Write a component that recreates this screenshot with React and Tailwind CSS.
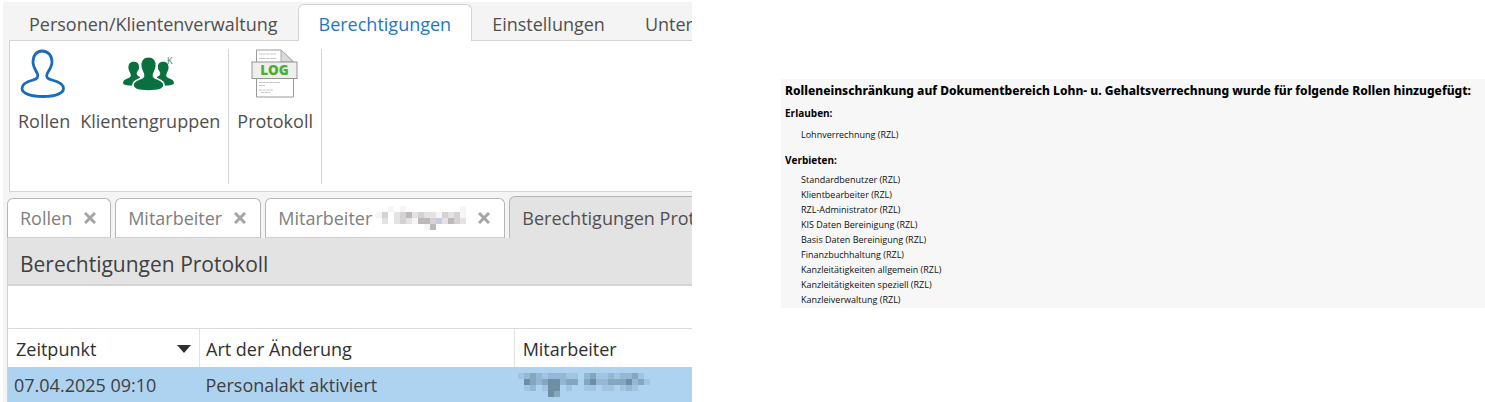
const ribbonTabs = ["Personen/Klientenverwaltung", "Berechtigungen", "Einstellungen", "Unter"];

const deniedRoles = [
  "Standardbenutzer (RZL)",
  "Klientbearbeiter (RZL)",
  "RZL-Administrator (RZL)",
  "KIS Daten Bereinigung (RZL)",
  "Basis Daten Bereinigung (RZL)",
  "Finanzbuchhaltung (RZL)",
  "Kanzleitätigkeiten allgemein (RZL)",
  "Kanzleitätigkeiten speziell (RZL)",
  "Kanzleiverwaltung (RZL)",
];

function RoleIcon() {
  return (
    <svg viewBox="0 0 48 50" className="h-[50px] w-12" fill="none" stroke="#1a6bba" strokeWidth="2.8" aria-hidden="true">
      <path d="M22 2C16.500 2 13 6.500 13 13C13 18 16 21.500 17.500 25C18.500 28 17.500 29.800 13 31C6 32.800 2 35.500 2 39.500C2 44.500 11 47.500 23 47.500C35 47.500 43.500 44.500 43.500 39.500C43.500 35.500 39 32.800 32 31C27 29.800 26 28 27 25C28.500 21.500 32 18 32 13C32 6.500 28 2 22 2Z" />
    </svg>
  );
}

function GroupIcon() {
  return (
    <svg viewBox="0 0 60 50" className="h-[50px] w-[60px]" fill="#0b7040" aria-hidden="true">
      <path d="M13.800 12.800c-4 0-5.700 2.700-5.300 6.700c.3 3 2.500 4.500 2.300 7.300c-.3 3-7.800 2.700-7.800 7.200c0 1.500 3 2.500 7 2.500h10V28c-3-1-3.500-2.500-3.200-4.200c.3-1.600 1.900-2.300 2.200-4.300c.5-4-1.200-6.700-5.200-6.700Z" />
      <path d="M43.200 12.800c4 0 5.700 2.700 5.300 6.700c-.3 3-2.500 4.500-2.300 7.300c.3 3 7.800 2.700 7.800 7.200c0 1.500-3 2.500-7 2.500H37V28c3-1 3.500-2.500 3.200-4.200c-.3-1.600-1.900-2.300-2.200-4.300c-.5-4 1.200-6.700 5.200-6.700Z" />
      <path stroke="#fff" strokeWidth="1.600" d="M28.500 7.800c-6 0-8.300 4.200-7.800 9.700c.4 4.500 3.300 6.500 2.800 9.500c-.6 3.500-10.500 3-10.500 9c0 4.500 6.500 6 15.500 6s15.500-1.500 15.500-6c0-6-9.900-5.500-10.500-9c-.5-3 2.400-5 2.800-9.500c.5-5.500-1.800-9.700-7.800-9.700Z" />
      <text x="47" y="15" fontSize="9" fontFamily="Noto Sans, sans-serif" fill="#4b8d70">K</text>
    </svg>
  );
}

function LogIcon() {
  return (
    <svg viewBox="0 0 48 50" className="h-[50px] w-12" aria-hidden="true">
      <path d="M5.500 1H30L42.500 13V48H5.500Z" fill="#fff" stroke="#9a9a9a" />
      <path d="M30 1V13H42.500Z" fill="#dadada" stroke="#a8a8a8" />
      <path d="M8 5H25M8 9.500H26M8 33.500H29M8 36.500H14M8 41H22M10 43.500H19" stroke="#c4c4c4" strokeDasharray="3 .6" />
      <rect x="1" y="13" width="45" height="16.500" fill="#efefef" stroke="#959595" />
      <text x="23.500" y="26" textAnchor="middle" fontSize="13.500" fontWeight="800" fontFamily="Open Sans, sans-serif" fill="#4bb02f">LOG</text>
    </svg>
  );
}

function Mosaic({ rows, colors, label }) {
  const cell = 6;
  return (
    <svg role="img" aria-label={label} shapeRendering="crispEdges" width={rows[0].length * cell} height={rows.length * cell} className="shrink-0">
      {rows.flatMap((row, y) =>
        [...row].map((key, x) =>
          colors[key] ? <rect key={`${x}-${y}`} x={x * cell} y={y * cell} width={cell} height={cell} fill={colors[key]} /> : null
        )
      )}
    </svg>
  );
}

const greys = { 1: "#f5f5f5", 2: "#e4e2e3", 3: "#d5d2d3", 4: "#bdb9b9", b: "#c6cce0" };
const blues = { 1: "#a2c4e0", 2: "#93b7d5", 3: "#84a7c0", 4: "#6e8ea5" };

function CloseButton() {
  return (
    <button type="button" aria-label="Tab schließen" className="text-[#a5a5a5]">
      <svg viewBox="0 0 12 12" className="size-3" stroke="currentColor" strokeWidth="3">
        <path d="M1 1L11 11M11 1L1 11" />
      </svg>
    </button>
  );
}

function DocTab({ label, children }) {
  return (
    <div className="flex h-10 shrink-0 items-center rounded-t-md border border-[#b5b5b5] border-b-[#cfcfcf] bg-white pr-3.5 pl-3">
      <button type="button" className="text-[#808080]">{label}</button>
      {children}
      <span className="ml-3 flex"><CloseButton /></span>
    </div>
  );
}

function RibbonButton({ icon, label }) {
  return (
    <button type="button" className="flex flex-col items-center gap-2.5">
      {icon}
      <span>{label}</span>
    </button>
  );
}

function AdminWindow() {
  return (
    <section className="min-w-0 overflow-hidden pt-0.5 pl-[3px]">
      <div className="bg-[#f4f4f4] pl-1 text-lg leading-6 whitespace-nowrap text-[#505050]">
        <nav className="flex h-[39px] pt-0.5 pl-0.5">
          {ribbonTabs.map((tab) => (
            <button
              key={tab}
              type="button"
              className={
                tab === "Berechtigungen"
                  ? "shrink-0 rounded-t-md border border-b-0 border-[#d4d4d4] bg-white px-5 pt-0.5 text-[#1e77c8]"
                  : "shrink-0 border-b border-[#d4d4d4] px-5 pt-1 last:grow last:pr-0 last:text-left"
              }
            >
              {tab}
            </button>
          ))}
        </nav>
        <div className="ml-0.5 flex h-[151px] border-b border-l border-[#d4d4d4] bg-white pt-2 pb-[7px]">
          <div className="flex items-start gap-2.5 border-r border-[#d4d4d4] px-2">
            <RibbonButton icon={<RoleIcon />} label="Rollen" />
            <RibbonButton icon={<GroupIcon />} label="Klientengruppen" />
          </div>
          <div className="flex items-start border-r border-[#d4d4d4] px-2">
            <RibbonButton icon={<LogIcon />} label="Protokoll" />
          </div>
        </div>
        <div className="flex items-end gap-1 pt-1">
          <DocTab label="Rollen" />
          <DocTab label="Mitarbeiter" />
          <DocTab label="Mitarbeiter">
            <span className="ml-1">
              <Mosaic label="Name unkenntlich" colors={greys} rows={["..1.1.........1", "13.234232213231", ".2.2321443b2432", "........14....."]} />
            </span>
          </DocTab>
          <button type="button" className="h-[42px] grow rounded-tl-md border-t border-l border-[#b5b5b5] bg-[#e3e3e3] pl-3 text-left">
            Berechtigungen Prot
          </button>
        </div>
        <div className="border-l border-[#d0d0d0] bg-white">
          <h1 className="h-12 border-b-2 border-[#d4d4d4] bg-[#e3e3e3] px-3 text-[21px] leading-[52px] text-[#404040]">Berechtigungen Protokoll</h1>
          <div className="h-[43px] border-b border-[#d9d9d9]" />
          <table className="w-full table-fixed border-collapse text-left">
            <colgroup>
              <col className="w-[28%]" />
              <col className="w-[46%]" />
              <col />
            </colgroup>
            <thead>
              <tr className="h-[38px] text-[#303030]">
                <th className="border-r border-[#e2e2e2] px-2 pt-0.5 font-normal">
                  <span className="flex items-center justify-between">
                    Zeitpunkt
                    <svg viewBox="0 0 14 8" className="h-2 w-3.5"><path d="M0 0H14L7 8Z" fill="#303030" /></svg>
                  </span>
                </th>
                <th className="border-r border-[#e2e2e2] px-1.5 pt-0.5 font-normal">Art der Änderung</th>
                <th className="px-2 pt-0.5 font-normal">Mitarbeiter</th>
              </tr>
            </thead>
            <tbody>
              <tr className="h-9 bg-[#aed3f1] text-[#404040]">
                <td className="px-1.5">07.04.2025 09:10</td>
                <td className="px-1.5">Personalakt aktiviert</td>
                <td className="px-1">
                  <Mosaic label="Name unkenntlich" colors={blues} rows={["1232122211.2311212231.", ".432344233.34223334231", ".12.144.1..11.11.121..", ".....43..............."]} />
                </td>
              </tr>
            </tbody>
          </table>
        </div>
      </div>
    </section>
  );
}

function RoleReport() {
  return (
    <section className="min-w-0 pt-[79px] pl-[89px] text-[#101010]">
      <div className="bg-[#f7f7f7] pb-px pl-1 text-[9px] leading-[15px] whitespace-nowrap">
        <h2 className="font-['Noto_Sans',sans-serif] text-[12px] leading-6 font-extrabold text-black">
          Rolleneinschränkung auf Dokumentbereich Lohn- u. Gehaltsverrechnung wurde für folgende Rollen hinzugefügt:
        </h2>
        <h3 className="text-[10px] leading-5 font-bold text-black">Erlauben:</h3>
        <ul className="pt-1 pl-4">
          <li>Lohnverrechnung (RZL)</li>
        </ul>
        <h3 className="pt-2 text-[10px] leading-5 font-bold text-black">Verbieten:</h3>
        <ul className="pt-0.5 pl-4">
          {deniedRoles.map((role) => (
            <li key={role}>{role}</li>
          ))}
        </ul>
      </div>
    </section>
  );
}

export default function App() {
  return (
    <main className="grid min-h-screen grid-cols-[692fr_793fr] overflow-hidden bg-white font-['Open_Sans','Noto_Sans',sans-serif]">
      <AdminWindow />
      <RoleReport />
    </main>
  );
}
